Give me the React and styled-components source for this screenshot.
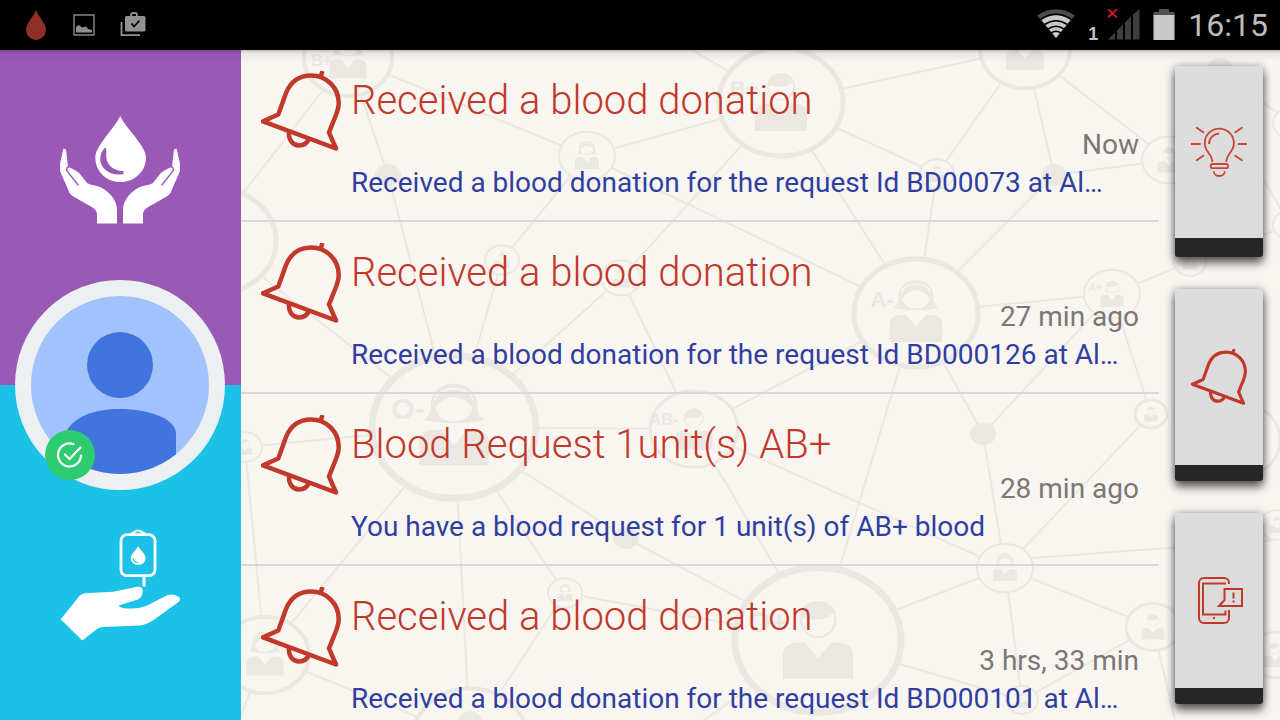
import React from 'react';
import styled, { createGlobalStyle, css } from 'styled-components';

const GlobalStyle = createGlobalStyle`
  :root {
    --red: #c0392b;
    --blue: #303f9f;
    --purple: #9b59b6;
    --cyan: #1bc1e6;
    --paper: #f9f6f2;
  }
  * {
    box-sizing: border-box;
  }
  body {
    margin: 0;
    overflow: hidden;
    font-family: Roboto, 'Liberation Sans', sans-serif;
    background: var(--paper);
  }
  button {
    padding: 0;
    border: 0;
    background: none;
    cursor: pointer;
  }
  svg {
    display: block;
  }
`;

const Screen = styled.div`
  display: flex;
  flex-direction: column;
  height: 100vh;
`;

const StatusBar = styled.header`
  display: flex;
  align-items: center;
  justify-content: space-between;
  flex: none;
  height: 50px;
  padding: 0 12px 0 24px;
  background: #000;
  color: #bdbdbd;
`;

const StatusGroup = styled.div`
  display: flex;
  align-items: center;
  gap: ${props => props.$gap}px;
`;

const Sim = styled.div`
  display: flex;
  align-items: flex-end;
  gap: 10px;
  font: bold 18px/14px 'Liberation Sans', sans-serif;
  color: #c4c4c4;
`;

const Clock = styled.time`
  font-size: 32px;
  line-height: 50px;
`;

const Content = styled.div`
  position: relative;
  display: flex;
  flex: 1;
  min-height: 0;
  &::after {
    content: '';
    position: absolute;
    top: 0;
    left: 0;
    right: 0;
    height: 12px;
    background: linear-gradient(rgba(0, 0, 0, 0.22), rgba(0, 0, 0, 0.06) 30%, rgba(0, 0, 0, 0));
    pointer-events: none;
  }
`;

const Sidebar = styled.nav`
  position: relative;
  display: grid;
  grid-auto-rows: 1fr;
  flex: none;
  width: 241px;
`;

const SideAction = styled.button`
  display: flex;
  align-items: flex-start;
  padding: ${props => props.$top}px 61px 0 60px;
  background: ${props => props.$color};
`;

const Avatar = styled.button`
  position: absolute;
  top: 50%;
  left: 50%;
  width: 210px;
  height: 210px;
  margin: -105px 0 0 -106px;
  border: 16px solid #ecf0f1;
  border-radius: 50%;
  background: #a1c2fd;
  > svg {
    border-radius: 50%;
  }
`;

const Badge = styled.span`
  position: absolute;
  left: 14px;
  bottom: -6px;
  display: flex;
  align-items: center;
  justify-content: center;
  width: 50px;
  height: 50px;
  border-radius: 50%;
  background: #2ecc71;
`;

const Main = styled.main`
  position: relative;
  display: flex;
  flex: 1;
  min-width: 0;
  overflow: hidden;
`;

const Backdrop = styled.svg`
  position: absolute;
  inset: 0;
  width: 100%;
  height: 100%;
  font-family: 'Liberation Sans', sans-serif;
  font-weight: bold;
`;

const List = styled.ul`
  position: relative;
  flex: 1;
  min-width: 0;
  margin: 0;
  padding: 0;
  overflow: hidden;
  list-style: none;
`;

const Item = styled.li`
  display: flex;
  gap: 10px;
  height: 172px;
  padding: 21px 20px 0;
  border-bottom: 2px solid #dad7d4;
`;

const ItemText = styled.div`
  flex: 1;
  min-width: 0;
  padding-top: 5px;
`;

const line = css`
  margin: 0;
  font-size: 28px;
  line-height: 38px;
  white-space: nowrap;
`;

const Title = styled.h2`
  margin: 0;
  font-size: 40px;
  font-weight: 300;
  line-height: 50px;
  white-space: nowrap;
  color: var(--red);
`;

const When = styled.p`
  ${line}
  text-align: right;
  color: #7a7775;
`;

const Message = styled.p`
  ${line}
  color: var(--blue);
`;

const Rail = styled.aside`
  position: relative;
  display: grid;
  grid-auto-rows: 1fr;
  flex: none;
  gap: 32px;
  padding: 16px 17px 16px 16px;
`;

const Card = styled.button`
  display: flex;
  align-items: center;
  justify-content: center;
  width: 88px;
  border-bottom: ${props => (props.$tall ? 19 : 16)}px solid #272727;
  border-radius: 3px;
  background: #dcdcdc;
  box-shadow: 0 6px 10px rgba(0, 0, 0, 0.6), 0 0 8px rgba(0, 0, 0, 0.3);
`;

const Bell = ({ size }) => (
  <svg width={size} height={size} viewBox="0 0 80 80" fill="none" stroke="#c0392b" strokeWidth="4.5" strokeLinejoin="round">
    <path d="M2 50.3 17.3 43.5 25 22C30 10 39 4.5 50 4.5 66 4.5 77.7 17 77.7 32 77.7 36 76.5 40 75 44L68 61.3 75 77.5Z" />
    <path d="M28 60C27 69 32 74.5 38 74.5 42.500 74.500 46 72.500 48 68" />
    <path d="M61.500 0 59.500 6" />
  </svg>
);

const Bulb = () => (
  <svg width="56" height="56" viewBox="0 0 56 56" fill="none" stroke="#cb4339" strokeWidth="1.8">
    <path d="M21.300 38C21.300 30 13.700 28 13.700 19.300a14.600 14.600 0 0 1 29.200 0C42.900 28 35.300 30 35.300 38" />
    <path d="M18 20A10.300 10.300 0 0 1 28.300 9.700" />
    <rect x="19.600" y="40" width="17.400" height="4.200" rx="2" />
    <path d="M22.800 47.300C22.800 50 25 52 28.300 52S33.800 50 33.800 47.300" />
    <path d="M5 3.300 13 8.700M51.600 3.300 43.600 8.700M0 20H9.700M46.900 20H56M5 36.700 13 31.300M51.600 36.700 43.600 31.300" />
  </svg>
);

const PhoneAlert = () => (
  <svg width="56" height="56" viewBox="0 0 56 56" fill="none" stroke="#c0392b" strokeWidth="2">
    <path d="M38 12V11A5 5 0 0 0 33 6H13A5 5 0 0 0 8 11V46A5 5 0 0 0 13 51H33A5 5 0 0 0 38 46V38" />
    <path d="M35 11.500H12V42.500H34.500V38.500" />
    <path d="M33.500 17H51V34H28L33.500 28Z" />
    <path d="M42.500 20.500V26.500M42.500 28.500V30.500M22 46H24" />
  </svg>
);

const CupHand = () => (
  <>
    <path fill="#fff" d="M3.300 39C5 38.500 6 39.500 6.200 41L8 57C10 57.500 16 60 20 64L27 73C31 75.500 36 75 40 77 49 81 57 90 57 100V113.500H37V105C37 101 35 99 31.700 97L16 88C12 86 10 84 9 81.700L0 61V54Z" />
    <path fill="none" stroke="#9b59b6" strokeWidth="1.400" d="M18.500 75.500 7 61C6 58.500 7 57 9 57" />
  </>
);

const DropHands = () => (
  <svg width="120" height="120" viewBox="0 0 120 120">
    <path fill="#fff" d="M60.200 6C65 17 86 36 86 47.500 86 61.500 74.500 72 60.500 72S35.300 61.500 35.300 47.500C35.300 36 55.500 17 60.200 6Z" />
    <path fill="#9b59b6" d="M44.500 38C38.500 45 39 54 45 59.500 50 64 57 65.500 63.500 64V61C53 61 45 54 46.300 43 46.500 39 46 37 44.500 38Z" />
    <CupHand />
    <g transform="matrix(-1 0 0 1 120 0)">
      <CupHand />
    </g>
  </svg>
);

const BagHand = () => (
  <svg width="120" height="120" viewBox="0 0 120 120" fill="#fff">
    <rect x="61" y="9.700" width="34" height="41" rx="6" fill="none" stroke="#fff" strokeWidth="2.800" />
    <path fill="none" stroke="#fff" strokeWidth="2.200" d="M71 8.500C75 8 75 5.500 78 5.500S81 8 85.500 8.500" />
    <path d="M82.500 52H85.500V61.500H82.500Z" />
    <path d="M78.200 21C80 25 85.700 29 85.700 33.300A7.500 6.500 0 0 1 70.700 33.300C70.700 29 76.500 25 78.200 21Z" />
    <path fill="none" stroke="#1bc1e6" strokeWidth="1.200" d="M73 33.500C73.500 36 75.500 37.500 78 37.500" />
    <path d="M.7 94.300 16.700 74.500C19 71 21 69 25 68.300L53 66.700 75 62.300C80 61 83 62.500 82.700 66 82.500 70 81 73 78 74.500L58.700 80.500C60 83 64 83.300 67 83.500 75 84 84 83 93 77.500L106.700 70.500C110 69 114 69.500 117 71 120.500 72.500 121 75 118.500 77L95 94C89 98 85 100 80 100.500L43 102C40 102 38.500 103 36.700 104.300L22.300 115.500Z" />
  </svg>
);

const PhotoIcon = () => (
  <svg width="24" height="24" viewBox="0 0 24 24" fill="#8f8f8f">
    <rect x="2" y="2" width="20" height="20" fill="none" stroke="#8f8f8f" strokeWidth="1.400" />
    <path d="M4 19V14L7 12 10 14.500 14 13.500 16 16 20 17V19.500H4Z" />
  </svg>
);

const CaseIcon = () => (
  <svg width="26" height="26" viewBox="0 0 26 26" fill="#929292">
    <path fill="none" stroke="#929292" strokeWidth="1.800" d="M1.500 10V23.200H20M11 4V3Q11 1 13 1H15Q17 1 17 3V4" />
    <rect x="5" y="4" width="20.500" height="15.500" rx="1.500" />
    <path fill="none" stroke="#000" strokeWidth="1.800" d="M11.500 11.500 14 14.500 19.500 8.500" />
  </svg>
);

const WifiIcon = () => (
  <svg width="38" height="32" viewBox="0 0 38 32">
    <path fill="#4c4c4c" d="M0 6.500Q19-6 38 6.500L19 29Z" />
    <path fill="#c9c9c9" d="M4.500 11Q19 1.500 33.500 11L19 29Z" />
    <g fill="none" stroke="#000" strokeWidth="1.600">
      <path d="M3.500 10.500Q19 0 34.500 10.500M7.500 15.500Q19 8 30.500 15.500M11 20Q19 14.500 27 20M14 24Q19 20.500 24 24" />
    </g>
  </svg>
);

const SignalIcon = () => (
  <svg width="32" height="32" viewBox="0 0 32 32">
    <path fill="#3e3e3e" d="M0 30.500 7 23.500V30.500ZM9 21.500 15 15.500V30.500H9ZM17 13.500 23 7.500V30.500H17ZM25 5.500 31.500 0V30.500H25Z" />
    <path stroke="#c8141c" strokeWidth="2" d="M0 0 9 8.500M9 0 0 8.500" />
  </svg>
);

const BatteryIcon = () => (
  <svg width="22" height="32" viewBox="0 0 22 32">
    <path fill="#505050" d="M6 0H16V3H21.500V7H.5V3H6Z" />
    <path fill="#c8c8c8" d="M.5 6H21.500V31H.5Z" />
  </svg>
);

// cx, cy, rx, ring width, person, blood type
const nodes = [
  [348, 58, 44, 4, 'w', 'B+'],
  [781, 102, 62, 5, 'm', 'B+'],
  [1025, 49, 45, 4, 'm'],
  [587, 156, 28, 2, 'w'],
  [215, 241, 61, 5],
  [502, 260, 17, 2, 'm'],
  [621, 278, 20, 2, 'm'],
  [937, 174, 17, 2, 'm'],
  [1169, 160, 27, 2, 'm'],
  [916, 313, 62, 5, 'w', 'A-'],
  [1112, 294, 28, 2, 'm', 'A+'],
  [454, 427, 82, 7, 'w', 'O-'],
  [694, 429, 44, 3, 'm', 'AB-'],
  [1151, 414, 16, 3, 'm'],
  [565, 593, 17, 2, 'w'],
  [818, 640, 83, 7, 'm', 'O+'],
  [1005, 568, 28, 2, 'w'],
  [1153, 627, 27, 3, 'm'],
  [1022, 700, 16, 2, 'm'],
  [245, 447, 17, 2, 'm'],
  [265, 655, 44, 4, 'w'],
  [470, 738, 57, 4, 'm'],
  [1190, 262, 16, 2, 'm'],
  [1235, 440, 45, 3],
  [1277, 525, 17, 2, 'm'],
  [1275, 655, 26, 3, 'm'],
  [1290, 123, 17, 2],
  [1290, 225, 17, 2],
];

const dots = [[388, 175], [1054, 175], [983, 434], [626, 538], [1220, 69]];

const links = [
  [348, 58, 241, 196], [348, 58, 388, 175], [348, 58, 587, 156], [388, 175, 454, 427],
  [587, 156, 781, 102], [587, 156, 502, 260], [587, 156, 916, 313], [502, 260, 454, 427],
  [781, 102, 621, 278], [621, 278, 454, 427], [621, 278, 694, 429], [241, 260, 454, 427],
  [781, 102, 1025, 49], [781, 102, 937, 174], [781, 102, 916, 313], [641, 20, 781, 102],
  [1025, 49, 937, 174], [1025, 49, 1054, 175], [1025, 49, 1169, 160], [1054, 175, 1169, 160],
  [1054, 175, 916, 313], [937, 174, 916, 313], [916, 313, 1112, 294], [916, 313, 694, 429],
  [916, 313, 818, 640], [916, 313, 983, 434], [1112, 294, 983, 434], [1112, 294, 1151, 414],
  [1112, 294, 1190, 262], [1190, 262, 1290, 225], [454, 427, 694, 429], [454, 427, 245, 447],
  [454, 427, 265, 655], [454, 427, 470, 738], [454, 427, 565, 593], [454, 427, 626, 538],
  [626, 538, 818, 640], [694, 429, 818, 640], [694, 429, 1005, 568], [983, 434, 1005, 568],
  [1151, 414, 1005, 568], [1005, 568, 818, 640], [1005, 568, 1153, 627], [1005, 568, 1022, 700],
  [1005, 560, 1277, 540], [1153, 627, 1022, 700], [818, 640, 1022, 700], [565, 593, 818, 640],
  [565, 593, 470, 738], [245, 447, 265, 655], [265, 655, 470, 738], [265, 655, 235, 730],
  [1220, 69, 1290, 123], [1235, 130, 1290, 225], [1153, 627, 1175, 720], [818, 640, 690, 730],
];

const Person = ({ woman }) => (
  <>
    {woman ? (
      <>
        <path d="M-33-8C-25-12-26-20-25-28-22-54 22-54 25-28 26-20 25-12 33-8 20-3-20-3-33-8Z" />
        <path fill="none" stroke="#f9f6f2" strokeWidth="2" d="M-21-30C-16-46 16-46 21-30" />
        <path fill="#f9f6f2" d="M-20-22Q0-44 20-22C20-12 11-6 0-6S-20-12-20-22Z" />
      </>
    ) : (
      <>
        <path d="M-20-22C-21-49 21-49 20-22A20 20 0 0 1-20-22Z" />
        <path fill="#f9f6f2" d="M-17-24Q8-18 17-30C20-12 10-4 0-4S-18-12-17-24Z" />
      </>
    )}
    <path d="M-38 42V14Q-36 3-22 3L-14 3 0 20 14 3H22Q36 3 38 14V42Z" />
  </>
);

const Network = () => (
  <Backdrop viewBox="241 50 1039 670" preserveAspectRatio="xMinYMin slice" aria-hidden="true">
    <g stroke="#ebe8e4" strokeWidth="2">
      {links.map(([x1, y1, x2, y2], i) => (
        <line key={i} x1={x1} y1={y1} x2={x2} y2={y2} />
      ))}
    </g>
    <g fill="#ebe8e4">
      {dots.map(([x, y]) => (
        <ellipse key={x} cx={x} cy={y} rx="13" ry="11" />
      ))}
      {nodes.map(([x, y, r, ring, who, type], i) => (
        <g key={i}>
          <ellipse cx={x} cy={y} rx={r} ry={r * 0.87} fill="#f9f6f2" stroke="#ebe8e4" strokeWidth={ring} />
          {who && (
            <g transform={`translate(${x} ${y}) scale(${r / 90})`}>
              <Person woman={who === 'w'} />
            </g>
          )}
          {type && (
            <text x={x - r * 0.36} y={Math.max(66, y - r * 0.1)} fontSize={Math.round(r * 0.36)} textAnchor="end">
              {type}
            </text>
          )}
        </g>
      ))}
    </g>
  </Backdrop>
);

const notifications = [
  { title: 'Received a blood donation', when: 'Now', message: 'Received a blood donation for the request Id BD00073 at Al…' },
  { title: 'Received a blood donation', when: '27 min ago', message: 'Received a blood donation for the request Id BD000126 at Al…' },
  { title: 'Blood Request 1unit(s) AB+', when: '28 min ago', message: 'You have a blood request for 1 unit(s) of AB+ blood' },
  { title: 'Received a blood donation', when: '3 hrs, 33 min', message: 'Received a blood donation for the request Id BD000101 at Al…' },
];

const Notification = ({ title, when, message }) => (
  <Item>
    <Bell size={80} />
    <ItemText>
      <Title>{title}</Title>
      <When>{when}</When>
      <Message>{message}</Message>
    </ItemText>
  </Item>
);

const App = () => (
  <Screen>
    <GlobalStyle />
    <StatusBar>
      <StatusGroup $gap={24}>
        <svg width="24" height="30" viewBox="0 0 24 30">
          <path fill="#8f2f27" d="M12 0C14 6 22 13 22 20A10 10 0 0 1 2 20C2 13 10 6 12 0Z" />
        </svg>
        <PhotoIcon />
        <CaseIcon />
      </StatusGroup>
      <StatusGroup $gap={13}>
        <WifiIcon />
        <Sim>
          <span>1</span>
          <SignalIcon />
        </Sim>
        <BatteryIcon />
        <Clock>16:15</Clock>
      </StatusGroup>
    </StatusBar>
    <Content>
      <Sidebar>
        <SideAction $color="var(--purple)" $top={60} aria-label="Donate blood">
          <DropHands />
        </SideAction>
        <SideAction $color="var(--cyan)" $top={140} aria-label="Request blood">
          <BagHand />
        </SideAction>
        <Avatar aria-label="Profile">
          <svg width="178" height="178" viewBox="0 0 178 178" fill="#4274df">
            <circle cx="89" cy="69" r="33" />
            <path d="M34 178V138C42 120 64 113 89 113S145 121 145 138V178Z" />
          </svg>
          <Badge>
            <svg width="26" height="26" viewBox="0 0 26 26" fill="none" stroke="#fff" strokeWidth="2.200" strokeLinecap="round" strokeLinejoin="round">
              <path d="M16.500 2.200A11.500 11.500 0 1 0 24 13.500" />
              <path d="M8 12.500 12.500 17 23.500 5.500" />
            </svg>
          </Badge>
        </Avatar>
      </Sidebar>
      <Main>
        <Network />
        <List>
          {notifications.map((item, i) => (
            <Notification key={i} {...item} />
          ))}
        </List>
        <Rail>
          <Card $tall aria-label="Tips">
            <Bulb />
          </Card>
          <Card aria-label="Notifications">
            <Bell size={56} />
          </Card>
          <Card aria-label="Alerts">
            <PhoneAlert />
          </Card>
        </Rail>
      </Main>
    </Content>
  </Screen>
);

export default App;
